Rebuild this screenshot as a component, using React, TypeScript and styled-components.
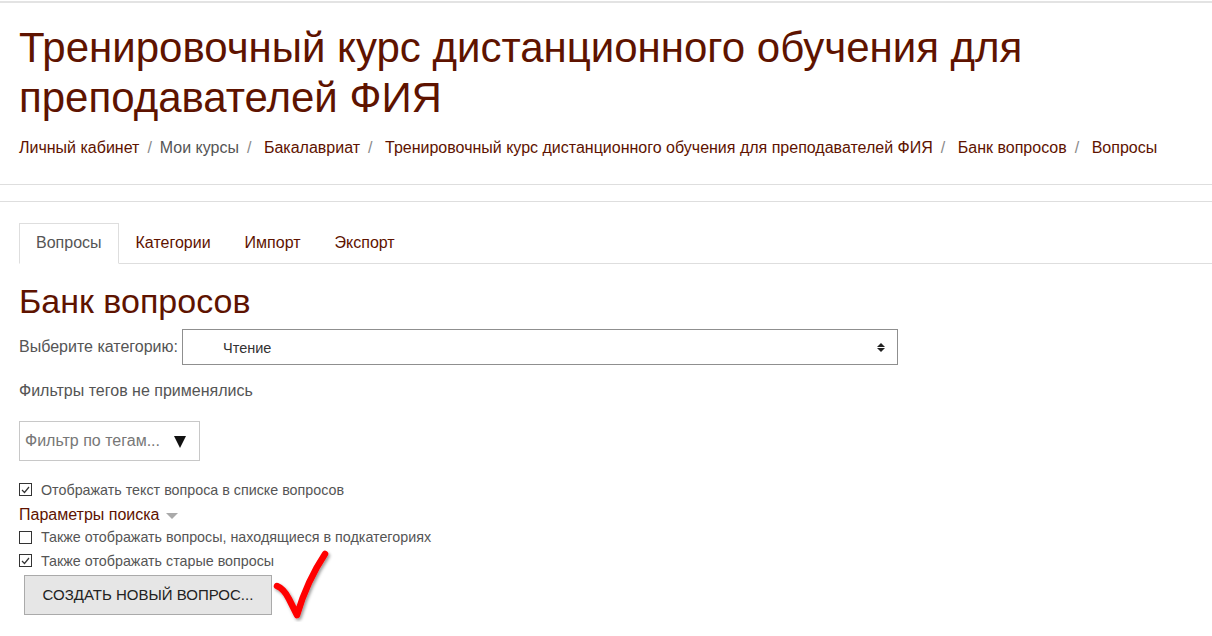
import React from "react";
import styled, { createGlobalStyle } from "styled-components";

const Global = createGlobalStyle`
  html, body { margin: 0; padding: 0; background: #fff; }
  body { font-family: "Liberation Sans", Arial, sans-serif; color: #555; }
`;

const RED = "#5e1300";

const Page = styled.div`
  display: flex;
  flex-direction: column;
  padding-top: 1px;
`;

const HeaderCard = styled.header`
  border-top: 2px solid #e3e3e3;
  border-bottom: 1px solid #dedede;
  padding: 20px 19px 25px;
`;

const Title = styled.h1`
  margin: 0;
  font-weight: 400;
  font-size: 42px;
  line-height: 50px;
  color: ${RED};
  max-width: 1060px;
`;

const Crumbs = styled.nav`
  display: flex;
  align-items: baseline;
  margin-top: 14px;
  font-size: 16px;
  line-height: 22px;
`;

const Crumb = styled.span<{ $muted?: boolean; $gap?: boolean }>`
  color: ${(p) => (p.$muted ? "#555" : RED)};
  margin-left: ${(p) => (p.$gap ? "4.5px" : "0")};
`;

const Sep = styled.span`
  color: #8a8a8a;
  padding: 0 8px 0 8px;
`;

const ContentCard = styled.main`
  margin-top: 16px;
  border-top: 1px solid #dedede;
  border-bottom: 1px solid #dedede;
  padding: 21px 19px 20px;
  display: flex;
  flex-direction: column;
`;

const Tabs = styled.div`
  display: flex;
  border-bottom: 1px solid #dedede;
  margin-right: -19px;
`;

const Tab = styled.div<{ $active?: boolean }>`
  font-size: 16px;
  line-height: 22px;
  padding: 8px 16px 9px;
  margin-bottom: -1px;
  border: 1px solid ${(p) => (p.$active ? "#dedede" : "transparent")};
  border-bottom-color: ${(p) => (p.$active ? "#fff" : "transparent")};
  color: ${(p) => (p.$active ? "#555" : RED)};
  background: ${(p) => (p.$active ? "#fff" : "transparent")};
`;

const H2 = styled.h2`
  margin: 17px 0 0;
  font-weight: 400;
  font-size: 34px;
  line-height: 40px;
  color: ${RED};
`;

const CategoryRow = styled.div`
  display: flex;
  align-items: center;
  gap: 4px;
  margin-top: 8px;
  font-size: 16px;
`;

const Select = styled.div`
  display: flex;
  align-items: center;
  justify-content: space-between;
  padding: 1px 12px 0 40px;
  box-sizing: border-box;
  width: 716px;
  height: 36px;
  border: 1px solid #8f8f8f;
  font-size: 14.5px;
  color: #333;
`;

const Arrows = styled.span`
  display: flex;
  flex-direction: column;
  gap: 1px;
`;

const Tri = styled.span<{ $up?: boolean }>`
  width: 0;
  height: 0;
  border-left: 4px solid transparent;
  border-right: 4px solid transparent;
  ${(p) => (p.$up ? "border-bottom: 4px solid #222;" : "border-top: 4px solid #222;")}
`;

const Note = styled.div`
  margin-top: 15px;
  font-size: 16px;
  line-height: 22px;
`;

const TagBox = styled.div`
  margin-top: 19px;
  width: 181px;
  height: 40px;
  box-sizing: border-box;
  border: 1px solid #c8c8c8;
  display: flex;
  align-items: center;
  justify-content: space-between;
  padding: 0 13px 0 5px;
  font-size: 16px;
  color: #777;
`;

const Down = styled.span`
  width: 0;
  height: 0;
  border-left: 6px solid transparent;
  border-right: 6px solid transparent;
  border-top: 12px solid #111;
  margin-top: 1px;
`;

const Options = styled.div`
  margin-top: 17px;
  display: flex;
  flex-direction: column;
`;

const CheckRow = styled.label`
  display: flex;
  align-items: center;
  gap: 9px;
  height: 23.5px;
  font-size: 14.3px;
  color: #555;
`;

const Box = styled.span`
  width: 13px;
  height: 13px;
  box-sizing: border-box;
  border: 1px solid #333;
  background: #fff;
  display: inline-flex;
  align-items: center;
  justify-content: center;
`;

const Params = styled.div`
  display: flex;
  align-items: center;
  gap: 7px;
  height: 24px;
  padding-top: 3px;
  box-sizing: border-box;
  font-size: 16px;
  color: ${RED};
`;

const SmallTri = styled.span`
  width: 0;
  height: 0;
  border-left: 6px solid transparent;
  border-right: 6px solid transparent;
  border-top: 6px solid #aaa;
  margin-top: 2px;
`;

const ButtonRow = styled.div`
  display: flex;
  align-items: flex-start;
  margin-top: 2px;
  padding-left: 5px;
`;

const Button = styled.button`
  width: 248px;
  height: 40px;
  background: #e6e6e6;
  border: 1px solid #aaa;
  font-family: "Liberation Sans", Arial, sans-serif;
  font-size: 15px;
  color: #222;
  text-transform: uppercase;
  padding: 0;
`;

const Mark = styled.svg`
  margin-top: -27px;
`;

const Check = () => (
  <Box>
    <svg width="9" height="8" viewBox="0 0 9 8">
      <path d="M1 4 L3.5 6.5 L8 1" fill="none" stroke="#333" strokeWidth="1.2" />
    </svg>
  </Box>
);

export default function App() {
  return (
    <>
      <Global />
      <Page>
        <HeaderCard>
          <Title>Тренировочный курс дистанционного обучения для преподавателей ФИЯ</Title>
          <Crumbs>
            <Crumb>Личный кабинет</Crumb>
            <Sep>/</Sep>
            <Crumb $muted>Мои курсы</Crumb>
            <Sep>/</Sep>
            <Crumb $gap>Бакалавриат</Crumb>
            <Sep>/</Sep>
            <Crumb $gap>Тренировочный курс дистанционного обучения для преподавателей ФИЯ</Crumb>
            <Sep>/</Sep>
            <Crumb $gap>Банк вопросов</Crumb>
            <Sep>/</Sep>
            <Crumb $gap>Вопросы</Crumb>
          </Crumbs>
        </HeaderCard>
        <ContentCard>
          <Tabs>
            <Tab $active>Вопросы</Tab>
            <Tab>Категории</Tab>
            <Tab>Импорт</Tab>
            <Tab>Экспорт</Tab>
          </Tabs>
          <H2>Банк вопросов</H2>
          <CategoryRow>
            <span>Выберите категорию:</span>
            <Select>
              <span>Чтение</span>
              <Arrows>
                <Tri $up />
                <Tri />
              </Arrows>
            </Select>
          </CategoryRow>
          <Note>Фильтры тегов не применялись</Note>
          <TagBox>
            <span>Фильтр по тегам...</span>
            <Down />
          </TagBox>
          <Options>
            <CheckRow>
              <Check />
              Отображать текст вопроса в списке вопросов
            </CheckRow>
            <Params>
              Параметры поиска
              <SmallTri />
            </Params>
            <CheckRow>
              <Box />
              Также отображать вопросы, находящиеся в подкатегориях
            </CheckRow>
            <CheckRow>
              <Check />
              Также отображать старые вопросы
            </CheckRow>
          </Options>
          <ButtonRow>
            <Button>Создать новый вопрос...</Button>
            <Mark width="62" height="74" viewBox="0 0 62 74">
              <defs>
                <filter id="sh" x="-30%" y="-20%" width="160%" height="140%">
                  <feDropShadow dx="1.5" dy="2" stdDeviation="1.5" floodColor="#000" floodOpacity="0.4" />
                </filter>
              </defs>
              <path
                d="M5 38 C10 40 14 45 17 51 C20 57 23 63 25 67 C30 50 39 27 53 6"
                fill="none"
                stroke="#f00"
                strokeWidth="6.5"
                strokeLinecap="round"
                strokeLinejoin="round"
                filter="url(#sh)"
              />
            </Mark>
          </ButtonRow>
        </ContentCard>
      </Page>
    </>
  );
}
